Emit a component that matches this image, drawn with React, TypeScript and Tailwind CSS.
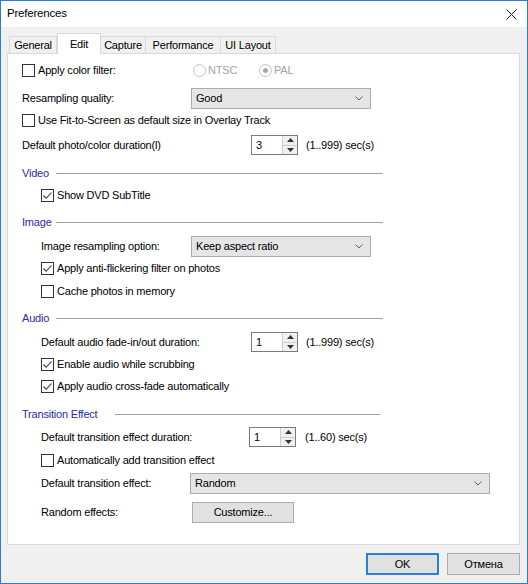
import { type ReactNode } from 'react';

function Check({ checked = false, label }: { checked?: boolean; label: string }) {
  return (
    <div className="flex items-center">
      <div className="w-[13px] h-[13px] border border-[#333333] bg-white flex items-center justify-center shrink-0">
        {checked && (
          <svg width="11" height="11" viewBox="0 0 11 11">
            <path d="M1.5 5.5 L4.2 8.3 L9.5 2.5" fill="none" stroke="#333333" strokeWidth="1.1" />
          </svg>
        )}
      </div>
      <span className="ml-[3px] whitespace-nowrap">{label}</span>
    </div>
  );
}

function Radio({ checked = false, label }: { checked?: boolean; label: string }) {
  return (
    <div className="flex items-center text-[#a3a3a3]">
      <div className="w-[13px] h-[13px] rounded-full border border-[#c4c4c4] bg-white flex items-center justify-center">
        {checked && <div className="w-[5px] h-[5px] rounded-full bg-[#a8a8a8]" />}
      </div>
      <span className="ml-[2px]">{label}</span>
    </div>
  );
}

function Combo({ value, width }: { value: string; width: string }) {
  return (
    <div className={`${width} h-[21px] bg-[#e5e5e5] border border-[#acacac] flex items-center justify-between pl-[4px] pr-[7px]`}>
      <span>{value}</span>
      <svg width="8" height="5" viewBox="0 0 8 5">
        <path d="M0.5 0.5 L4 4 L7.5 0.5" fill="none" stroke="#606060" strokeWidth="1" />
      </svg>
    </div>
  );
}

function Spin({ value }: { value: string }) {
  return (
    <div className="w-[47px] h-[20px] border border-[#7a7a7a] bg-white flex">
      <span className="flex-1 pl-[4px] leading-[18px]">{value}</span>
      <div className="w-[15px] flex flex-col border-l border-[#cfcfcf] bg-[#f0f0f0]">
        <div className="flex-1 flex items-center justify-center border-b border-[#cfcfcf]">
          <svg width="7" height="4" viewBox="0 0 7 4">
            <path d="M0 4 L3.5 0 L7 4 Z" fill="#333333" />
          </svg>
        </div>
        <div className="flex-1 flex items-center justify-center">
          <svg width="7" height="4" viewBox="0 0 7 4">
            <path d="M0 0 L3.5 4 L7 0 Z" fill="#333333" />
          </svg>
        </div>
      </div>
    </div>
  );
}

function Heading({ text, textW, lineW }: { text: string; textW: string; lineW: string }) {
  return (
    <div className="flex items-center">
      <span className={`${textW} text-[#2a2aa3] whitespace-nowrap`}>{text}</span>
      <div className={`${lineW} h-px bg-[#a0a0a0]`} />
    </div>
  );
}

function Row({ mt, children }: { mt: string; children: ReactNode }) {
  return <div className={`${mt} h-[20px] flex items-center`}>{children}</div>;
}

export default function App() {
  const tabs = [
    { name: 'General', w: 'w-[48px]' },
    { name: 'Edit', w: 'w-[44px]', active: true },
    { name: 'Capture', w: 'w-[46px]' },
    { name: 'Performance', w: 'w-[76px]' },
    { name: 'UI Layout', w: 'w-[56px]' },
  ];

  return (
    <div className="w-[528px] h-[584px] border border-[#2b7bd1] bg-[#f0f0f0] flex flex-col font-['Liberation_Sans',Arial,sans-serif] text-[11px] tracking-[-0.2px] text-black">
      {/* title bar */}
      <div className="h-[26px] bg-white flex items-center justify-between pl-[6px] pr-[10px]">
        <span className="text-[11.5px]">Preferences</span>
        <svg width="11" height="11" viewBox="0 0 11 11">
          <path d="M0.5 0.5 L10.5 10.5 M10.5 0.5 L0.5 10.5" stroke="#1a1a1a" strokeWidth="1" />
        </svg>
      </div>

      {/* tabs */}
      <div className="mt-[6px] h-[20px] pl-[8px] flex items-end">
        {tabs.map((t) =>
          t.active ? (
            <div
              key={t.name}
              className={`${t.w} h-[21px] -mb-px relative z-10 bg-white border border-b-0 border-[#d9d9d9] flex items-start justify-center pt-[2px]`}
            >
              {t.name}
            </div>
          ) : (
            <div
              key={t.name}
              className={`${t.w} h-[17px] border border-b-0 border-[#d9d9d9] -ml-px first:ml-0 flex items-center justify-center`}
            >
              {t.name}
            </div>
          )
        )}
      </div>

      {/* tab panel */}
      <div className="ml-[6px] mr-[7px] h-[492px] border border-[#d9d9d9] bg-white flex flex-col pl-[14px]">
        <Row mt="mt-[6px]">
          <div className="w-[171px]">
            <Check label="Apply color filter:" />
          </div>
          <div className="w-[66px]">
            <Radio label="NTSC" />
          </div>
          <Radio checked label="PAL" />
        </Row>
        <Row mt="mt-[8px]">
          <span className="w-[169px]">Resampling quality:</span>
          <Combo value="Good" width="w-[180px]" />
        </Row>
        <Row mt="mt-[2px]">
          <Check label="Use Fit-to-Screen as default size in Overlay Track" />
        </Row>
        <Row mt="mt-[5px]">
          <span className="w-[229px]">Default photo/color duration(l)</span>
          <Spin value="3" />
          <span className="ml-[8px]">(1..999) sec(s)</span>
        </Row>

        <Row mt="mt-[8px]">
          <Heading text="Video" textW="w-[34px]" lineW="w-[327px]" />
        </Row>
        <Row mt="mt-[2px]">
          <div className="ml-[19px]">
            <Check checked label="Show DVD SubTitle" />
          </div>
        </Row>

        <Row mt="mt-[7px]">
          <Heading text="Image" textW="w-[34px]" lineW="w-[327px]" />
        </Row>
        <Row mt="mt-[4px]">
          <span className="ml-[19px] w-[150px]">Image resampling option:</span>
          <Combo value="Keep aspect ratio" width="w-[180px]" />
        </Row>
        <Row mt="mt-[2px]">
          <div className="ml-[19px]">
            <Check checked label="Apply anti-flickering filter on photos" />
          </div>
        </Row>
        <Row mt="mt-[3px]">
          <div className="ml-[19px]">
            <Check label="Cache photos in memory" />
          </div>
        </Row>

        <Row mt="mt-[7px]">
          <Heading text="Audio" textW="w-[34px]" lineW="w-[327px]" />
        </Row>
        <Row mt="mt-[4px]">
          <span className="ml-[19px] w-[210px]">Default audio fade-in/out duration:</span>
          <Spin value="1" />
          <span className="ml-[8px]">(1..999) sec(s)</span>
        </Row>
        <Row mt="mt-[2px]">
          <div className="ml-[19px]">
            <Check checked label="Enable audio while scrubbing" />
          </div>
        </Row>
        <Row mt="mt-[2px]">
          <div className="ml-[19px]">
            <Check checked label="Apply audio cross-fade automatically" />
          </div>
        </Row>

        <Row mt="mt-[8px]">
          <Heading text="Transition Effect" textW="w-[93px]" lineW="w-[265px]" />
        </Row>
        <Row mt="mt-[3px]">
          <span className="ml-[19px] w-[208px]">Default transition effect duration:</span>
          <Spin value="1" />
          <span className="ml-[9px]">(1..60) sec(s)</span>
        </Row>
        <Row mt="mt-[3px]">
          <div className="ml-[19px]">
            <Check label="Automatically add transition effect" />
          </div>
        </Row>
        <Row mt="mt-[3px]">
          <span className="ml-[19px] w-[149px]">Default transition effect:</span>
          <Combo value="Random" width="w-[300px]" />
        </Row>
        <Row mt="mt-[9px]">
          <span className="ml-[19px] w-[151px]">Random effects:</span>
          <button className="w-[102px] h-[21px] bg-[#e1e1e1] border border-[#adadad] flex items-center justify-center">
            Customize...
          </button>
        </Row>
      </div>

      {/* footer buttons */}
      <div className="mt-[8px] pr-[7px] flex justify-end gap-[8px]">
        <button className="w-[73px] h-[22px] bg-[#e1e1e1] border-2 border-[#2a7fd6] flex items-center justify-center">
          OK
        </button>
        <button className="w-[73px] h-[22px] bg-[#e1e1e1] border border-[#adadad] flex items-center justify-center">
          Отмена
        </button>
      </div>
    </div>
  );
}
